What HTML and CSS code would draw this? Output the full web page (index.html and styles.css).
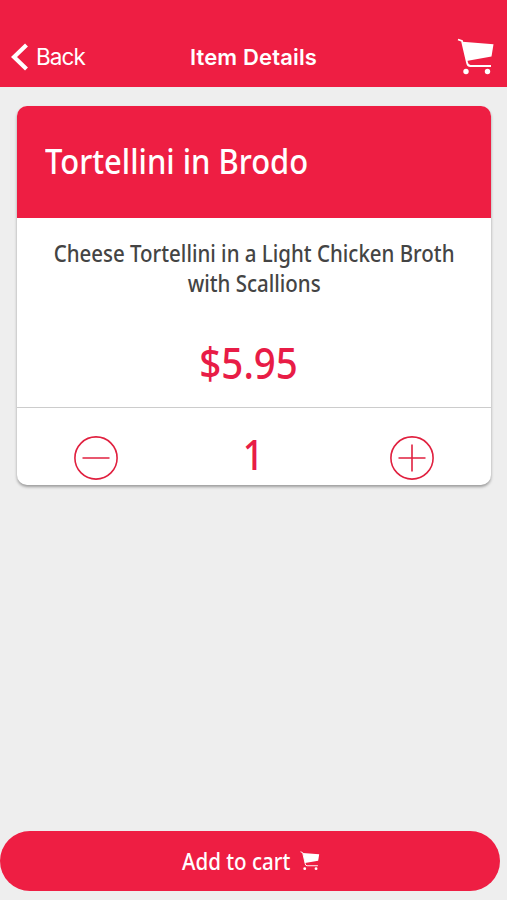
FILE: index.html
```html
<!DOCTYPE html>
<html lang="en">
<head>
    <meta charset="UTF-8">
    <meta name="viewport" content="width=device-width, initial-scale=1.0">
    <title>Item Details</title>
    <link rel="stylesheet" href="styles.css">
</head>
<body>
    <svg class="symbols" width="0" height="0">
        <symbol id="cart" viewBox="0 0 38 38">
            <path d="M1 1.5 L5 3 L10 24.5 Q10.5 28 13.5 28 H34" fill="none" stroke="currentColor" stroke-width="1.8"/>
            <path d="M5.5 3.8 L36.5 6.3 L34.5 18.5 L9.5 23 Z" fill="currentColor"/>
            <circle cx="9" cy="33.5" r="2.7" fill="currentColor"/>
            <circle cx="30.5" cy="33.5" r="2.7" fill="currentColor"/>
        </symbol>
    </svg>

    <header class="navbar">
        <a class="back">
            <svg class="back-icon" viewBox="0 0 18 28"><path d="M15.5 2 L3 14 L15.5 26" fill="none" stroke="currentColor" stroke-width="4.2"/></svg>
            <span class="back-label">Back</span>
        </a>
        <h1 class="navbar-title">Item Details</h1>
        <a class="navbar-cart"><svg class="cart-icon"><use href="#cart"/></svg></a>
    </header>

    <main class="content">
        <section class="card">
            <h2 class="card-title"><span class="card-name">Tortellini in Brodo</span></h2>
            <div class="card-body">
                <p class="description">Cheese Tortellini in a Light Chicken Broth<br>with Scallions</p>
                <p class="price">$5.95</p>
            </div>
            <div class="quantity">
                <svg class="round-icon" viewBox="0 0 44 44"><circle cx="22" cy="22" r="21.1"/><path d="M8.5 22 H35.5"/></svg>
                <span class="count">1</span>
                <svg class="round-icon" viewBox="0 0 44 44"><circle cx="22" cy="22" r="21.1"/><path d="M8.5 22 H35.5 M22 8.5 V35.5"/></svg>
            </div>
        </section>
    </main>

    <footer class="footer">
        <button class="add-button">
            <span class="add-label">Add to cart</span>
            <svg class="cart-icon-small"><use href="#cart"/></svg>
        </button>
    </footer>
</body>
</html>
```
FILE: styles.css
```css
* {
    box-sizing: border-box;
}

body {
    margin: 0;
    height: 900px;
    display: flex;
    flex-direction: column;
    overflow: hidden;
    background-color: #eeeeee;
    font-family: "Noto Sans", sans-serif;
    font-weight: 500;
}

h1, h2, p {
    margin: 0;
    font-weight: 500;
}

.symbols {
    position: absolute;
}

/* Top bar */
.navbar {
    height: 87px;
    padding: 26px 12px 0 11px;
    display: grid;
    grid-template-columns: 1fr auto 1fr;
    align-items: center;
    background-color: #ee1e43;
    color: white;
    font-family: Inter, sans-serif;
}

.back {
    display: flex;
    align-items: center;
    gap: 7px;
}

.back-icon {
    width: 18px;
    height: 28px;
}

.back-label {
    font-size: 22.5px;
    font-weight: 400;
    letter-spacing: -0.9px;
}

.navbar-title {
    padding-left: 1px;
    font-size: 22px;
    font-weight: 600;
    letter-spacing: 0.15px;
}

.navbar-cart {
    justify-self: end;
    height: 38px;
}

.cart-icon {
    width: 38px;
    height: 38px;
}

/* Item card */
.content {
    flex: 1;
    padding: 19px 16px 0 17px;
}

.card {
    height: 379px;
    border-radius: 10px;
    overflow: hidden;
    background-color: white;
    box-shadow: 0 2px 3px rgba(0,0,0,0.35);
}

.card-title {
    height: 112px;
    padding: 0 28px;
    line-height: 110px;
    background-color: #ee1e43;
    color: white;
    font-size: 35px;
}

.card-name {
    display: inline-block;
    transform: scaleX(0.884);
    transform-origin: left;
}

.card-body {
    height: 190px;
    padding-top: 20px;
    display: flex;
    flex-direction: column;
    align-items: center;
    border-bottom: 1px solid #cccccc;
    text-align: center;
}

.description {
    color: #444444;
    font-size: 23.5px;
    line-height: 30px;
    white-space: nowrap;
    transform: scaleX(0.871);
}

.price {
    margin-top: 35px;
    padding-right: 11px;
    color: #e81c46;
    font-size: 43px;
    line-height: 60px;
    transform: scaleX(0.895);
}

.quantity {
    height: 77px;
    padding: 23px 57px 0;
    display: flex;
    justify-content: space-between;
    align-items: center;
    color: #e0203f;
}

.round-icon {
    width: 44px;
    height: 44px;
    fill: none;
    stroke: currentColor;
    stroke-width: 1.6;
}

.count {
    margin: -8px 2px 0 0;
    color: #e81c46;
    font-size: 42.5px;
    line-height: 46px;
    transform: scaleX(0.86);
}

/* Bottom button */
.footer {
    padding: 0 7px 9px 0;
}

.add-button {
    width: 100%;
    height: 60px;
    display: flex;
    justify-content: center;
    align-items: center;
    gap: 10px;
    padding: 0;
    border: none;
    border-radius: 30px;
    background-color: #ee1e43;
    color: white;
    font: inherit;
    font-size: 23px;
}

.add-label {
    margin-left: -11px;
    padding-bottom: 1px;
    transform: scaleX(0.893);
    transform-origin: right;
}

.cart-icon-small {
    width: 20px;
    height: 22px;
}
```
